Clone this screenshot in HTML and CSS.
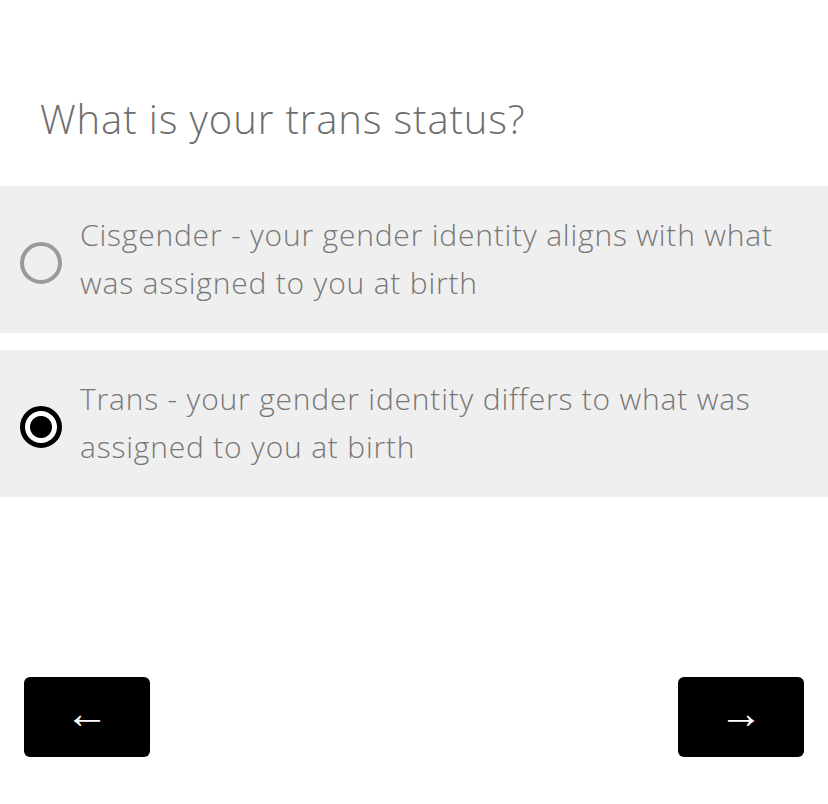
FILE: index.html
```html
<!DOCTYPE html>
<html lang="en">
<head>
<meta charset="utf-8">
<title>Trans status</title>
<link rel="stylesheet" href="styles.css">
</head>
<body>
<main class="page">
  <h1 class="question">What is your trans status?</h1>
  <div class="options">
    <label class="option">
      <span class="radio"></span>
      <span class="option-text">Cisgender - your gender identity aligns with what was assigned to you at birth</span>
    </label>
    <label class="option">
      <span class="radio radio-checked"></span>
      <span class="option-text">Trans - your gender identity differs to what was assigned to you at birth</span>
    </label>
  </div>
  <nav class="nav">
    <button class="nav-btn" type="button">←</button>
    <button class="nav-btn" type="button">→</button>
  </nav>
</main>
</body>
</html>
```
FILE: styles.css
```css
html, body {
  margin: 0;
  padding: 0;
  background: #fff;
}
.page {
  font-family: "Open Sans", "Noto Sans", sans-serif;
  font-weight: 300;
  color: #777;
}
.question {
  margin: 0;
  padding: 96px 0 0 40px;
  font-size: 40px;
  line-height: 46px;
  letter-spacing: 0.9px;
  font-weight: 300;
  color: #6e6e6e;
}
.options {
  margin-top: 44px;
  display: flex;
  flex-direction: column;
  gap: 17px;
}
.option {
  display: flex;
  align-items: center;
  background: #efefef;
  padding: 25px 20px 26px 20px;
}
.radio {
  flex: none;
  width: 42px;
  height: 42px;
  box-sizing: border-box;
  border: 4px solid #9a9a9a;
  border-radius: 50%;
  margin-right: 18px;
  margin-top: 8px;
}
.radio-checked {
  border: 5px solid #000;
  background: radial-gradient(circle, #000 0 10.5px, #fff 11.5px);
}
.option-text {
  font-size: 30px;
  line-height: 48px;
  letter-spacing: 0.8px;
  color: #777;
}
.nav {
  margin-top: 180px;
  padding: 0 24px;
  display: flex;
  justify-content: space-between;
}
.nav-btn {
  width: 126px;
  height: 80px;
  border: none;
  border-radius: 6px;
  background: #000;
  color: #fff;
  font-family: "Liberation Serif", "DejaVu Serif", serif;
  font-size: 44px;
  line-height: 1;
  padding: 0 0 6px 0;
  cursor: pointer;
}
```
